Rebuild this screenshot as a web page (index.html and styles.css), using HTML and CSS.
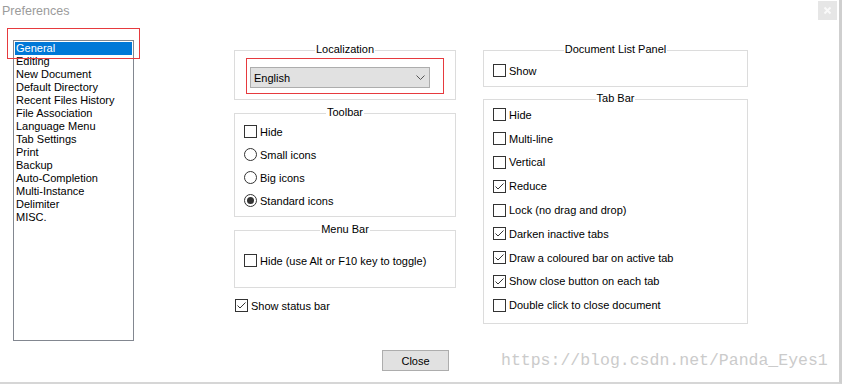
FILE: index.html
```html
<!DOCTYPE html>
<html lang="en">
<head>
    <meta charset="UTF-8">
    <title>Preferences</title>
    <link rel="stylesheet" href="styles.css">
</head>
<body>
    <div class="Prefs">
        <div class="Prefs-titlebar">
            <span class="Prefs-title">Preferences</span>
            <span class="Prefs-closeX">
                <svg width="19" height="19" viewBox="0 0 19 19"><path d="M6.5 6.5 L12.5 12.5 M12.5 6.5 L6.5 12.5" stroke="#fafafa" stroke-width="2" fill="none"/></svg>
            </span>
        </div>

        <div class="Prefs-main">
            <ul class="Prefs-nav">
                <li class="Prefs-navItem Prefs-navItem--active">General</li>
                <li class="Prefs-navItem">Editing</li>
                <li class="Prefs-navItem">New Document</li>
                <li class="Prefs-navItem">Default Directory</li>
                <li class="Prefs-navItem">Recent Files History</li>
                <li class="Prefs-navItem">File Association</li>
                <li class="Prefs-navItem">Language Menu</li>
                <li class="Prefs-navItem">Tab Settings</li>
                <li class="Prefs-navItem">Print</li>
                <li class="Prefs-navItem">Backup</li>
                <li class="Prefs-navItem">Auto-Completion</li>
                <li class="Prefs-navItem">Multi-Instance</li>
                <li class="Prefs-navItem">Delimiter</li>
                <li class="Prefs-navItem">MISC.</li>
            </ul>

            <div class="Prefs-col Prefs-col--left">
                <div class="Prefs-group Prefs-group--localization">
                    <span class="Prefs-groupTitle">Localization</span>
                    <div class="Prefs-mark">
                        <div class="Prefs-combo">
                            <span>English</span>
                            <svg width="9" height="5" viewBox="0 0 9 5"><path d="M0.5 0.5 L4.5 4.5 L8.5 0.5" stroke="#555" fill="none"/></svg>
                        </div>
                    </div>
                </div>

                <div class="Prefs-group Prefs-group--toolbar">
                    <span class="Prefs-groupTitle">Toolbar</span>
                    <label class="Prefs-option"><span class="Prefs-check"></span>Hide</label>
                    <label class="Prefs-option"><span class="Prefs-radio"></span>Small icons</label>
                    <label class="Prefs-option"><span class="Prefs-radio"></span>Big icons</label>
                    <label class="Prefs-option"><span class="Prefs-radio Prefs-radio--on"></span>Standard icons</label>
                </div>

                <div class="Prefs-group Prefs-group--menubar">
                    <span class="Prefs-groupTitle">Menu Bar</span>
                    <label class="Prefs-option"><span class="Prefs-check"></span>Hide (use Alt or F10 key to toggle)</label>
                </div>

                <label class="Prefs-option Prefs-status"><span class="Prefs-check"><svg width="11" height="11" viewBox="0 0 11 11"><path d="M1.5 5.5 L4 8 L9.5 2.5" stroke="#333" fill="none"/></svg></span>Show status bar</label>
            </div>

            <div class="Prefs-col Prefs-col--right">
                <div class="Prefs-group Prefs-group--doclist">
                    <span class="Prefs-groupTitle">Document List Panel</span>
                    <label class="Prefs-option"><span class="Prefs-check"></span>Show</label>
                </div>

                <div class="Prefs-group Prefs-group--tabbar">
                    <span class="Prefs-groupTitle">Tab Bar</span>
                    <label class="Prefs-option"><span class="Prefs-check"></span>Hide</label>
                    <label class="Prefs-option"><span class="Prefs-check"></span>Multi-line</label>
                    <label class="Prefs-option"><span class="Prefs-check"></span>Vertical</label>
                    <label class="Prefs-option"><span class="Prefs-check"><svg width="11" height="11" viewBox="0 0 11 11"><path d="M1.5 5.5 L4 8 L9.5 2.5" stroke="#333" fill="none"/></svg></span>Reduce</label>
                    <label class="Prefs-option"><span class="Prefs-check"></span>Lock (no drag and drop)</label>
                    <label class="Prefs-option"><span class="Prefs-check"><svg width="11" height="11" viewBox="0 0 11 11"><path d="M1.5 5.5 L4 8 L9.5 2.5" stroke="#333" fill="none"/></svg></span>Darken inactive tabs</label>
                    <label class="Prefs-option"><span class="Prefs-check"><svg width="11" height="11" viewBox="0 0 11 11"><path d="M1.5 5.5 L4 8 L9.5 2.5" stroke="#333" fill="none"/></svg></span>Draw a coloured bar on active tab</label>
                    <label class="Prefs-option"><span class="Prefs-check"><svg width="11" height="11" viewBox="0 0 11 11"><path d="M1.5 5.5 L4 8 L9.5 2.5" stroke="#333" fill="none"/></svg></span>Show close button on each tab</label>
                    <label class="Prefs-option"><span class="Prefs-check"></span>Double click to close document</label>
                </div>
            </div>
        </div>

        <div class="Prefs-footer">
            <button type="button" class="Prefs-button">Close</button>
        </div>

        <div class="Prefs-annotation"></div>
        <div class="Prefs-watermark">https://blog.csdn.net/Panda_Eyes1</div>
    </div>
</body>
</html>
```

FILE: styles.css
```css
* {
    margin: 0;
    padding: 0;
    box-sizing: border-box;
}

html, body {
    width: 842px;
    height: 384px;
    overflow: hidden;
    background: #ffffff;
}

body {
    font-family: "Liberation Sans", Arial, sans-serif;
    font-size: 11px;
    color: #000000;
}

.Prefs {
    position: relative;
    width: 842px;
    height: 384px;
    border-right: 3px solid #cfcfcf;
    border-bottom: 2px solid #d6d6d6;
}

.Prefs-titlebar {
    display: flex;
    justify-content: space-between;
    height: 22px;
}

.Prefs-title {
    padding: 4px 0 0 2px;
    font-size: 12.5px;
    line-height: 15px;
    color: #9b9b9b;
}

.Prefs-closeX {
    display: flex;
    width: 19px;
    height: 19px;
    margin: 1px 2px 0 0;
    background: #e6e6e6;
}

.Prefs-main {
    display: flex;
    align-items: flex-start;
    height: 320px;
}

.Prefs-nav {
    list-style: none;
    width: 121px;
    height: 301px;
    margin: 18px 0 0 13px;
    padding: 1px;
    border: 1px solid #828790;
}

.Prefs-navItem {
    height: 13px;
    line-height: 13px;
    padding-left: 1px;
    white-space: nowrap;
}

.Prefs-navItem--active {
    background: #0078d7;
    color: #ffffff;
}

.Prefs-col--left {
    width: 222px;
    margin: 28px 0 0 100px;
}

.Prefs-col--right {
    width: 265px;
    margin: 28px 0 0 27px;
}

.Prefs-group {
    position: relative;
    border: 1px solid #dcdcdc;
}

.Prefs-groupTitle {
    position: absolute;
    top: -8px;
    left: 0;
    right: 0;
    width: max-content;
    margin: 0 auto;
    padding: 0 1px;
    line-height: 13px;
    background: #ffffff;
    white-space: nowrap;
}

.Prefs-group--localization {
    padding: 7px 11px 5px;
}

.Prefs-mark {
    width: 198px;
    padding: 8px 13px 5px 3px;
    border: 1px solid #e63a3e;
}

.Prefs-combo {
    display: flex;
    align-items: center;
    justify-content: space-between;
    height: 21px;
    padding: 0 4px 0 3px;
    background: #e1e1e1;
    border: 1px solid #adadad;
}

.Prefs-group--toolbar {
    margin-top: 13px;
    padding: 6px 0 4px 9px;
}

.Prefs-group--menubar {
    margin-top: 13px;
    padding: 18px 0 15px 9px;
}

.Prefs-group--doclist {
    padding: 8px 0 4px 9px;
}

.Prefs-group--tabbar {
    height: 225px;
    margin-top: 12px;
    padding: 3px 0 0 9px;
}

.Prefs-option {
    display: flex;
    align-items: center;
    gap: 3px;
    height: 23px;
    white-space: nowrap;
}

.Prefs-group--tabbar .Prefs-option {
    height: 23.8px;
}

.Prefs-status {
    margin: 6px 0 0 1px;
}

.Prefs-check {
    flex: none;
    display: flex;
    width: 13px;
    height: 13px;
    border: 1px solid #333333;
    background: #ffffff;
}

.Prefs-radio {
    flex: none;
    display: flex;
    align-items: center;
    justify-content: center;
    width: 13px;
    height: 13px;
    border: 1px solid #333333;
    border-radius: 50%;
    background: #ffffff;
}

.Prefs-radio--on::after {
    content: "";
    width: 7px;
    height: 7px;
    border-radius: 50%;
    background: #333333;
}

.Prefs-footer {
    height: 40px;
    padding: 8px 0 0 382px;
}

.Prefs-button {
    width: 67px;
    height: 21px;
    font: inherit;
    color: #000000;
    background: #e1e1e1;
    border: 1px solid #adadad;
}

.Prefs-annotation {
    position: absolute;
    left: 7px;
    top: 28px;
    width: 133px;
    height: 31px;
    border: 1px solid #e63a3e;
}

.Prefs-watermark {
    position: absolute;
    left: 501px;
    top: 352px;
    font-family: "Liberation Mono", monospace;
    font-size: 16.5px;
    line-height: 18px;
    color: #cbcbcb;
}
```
